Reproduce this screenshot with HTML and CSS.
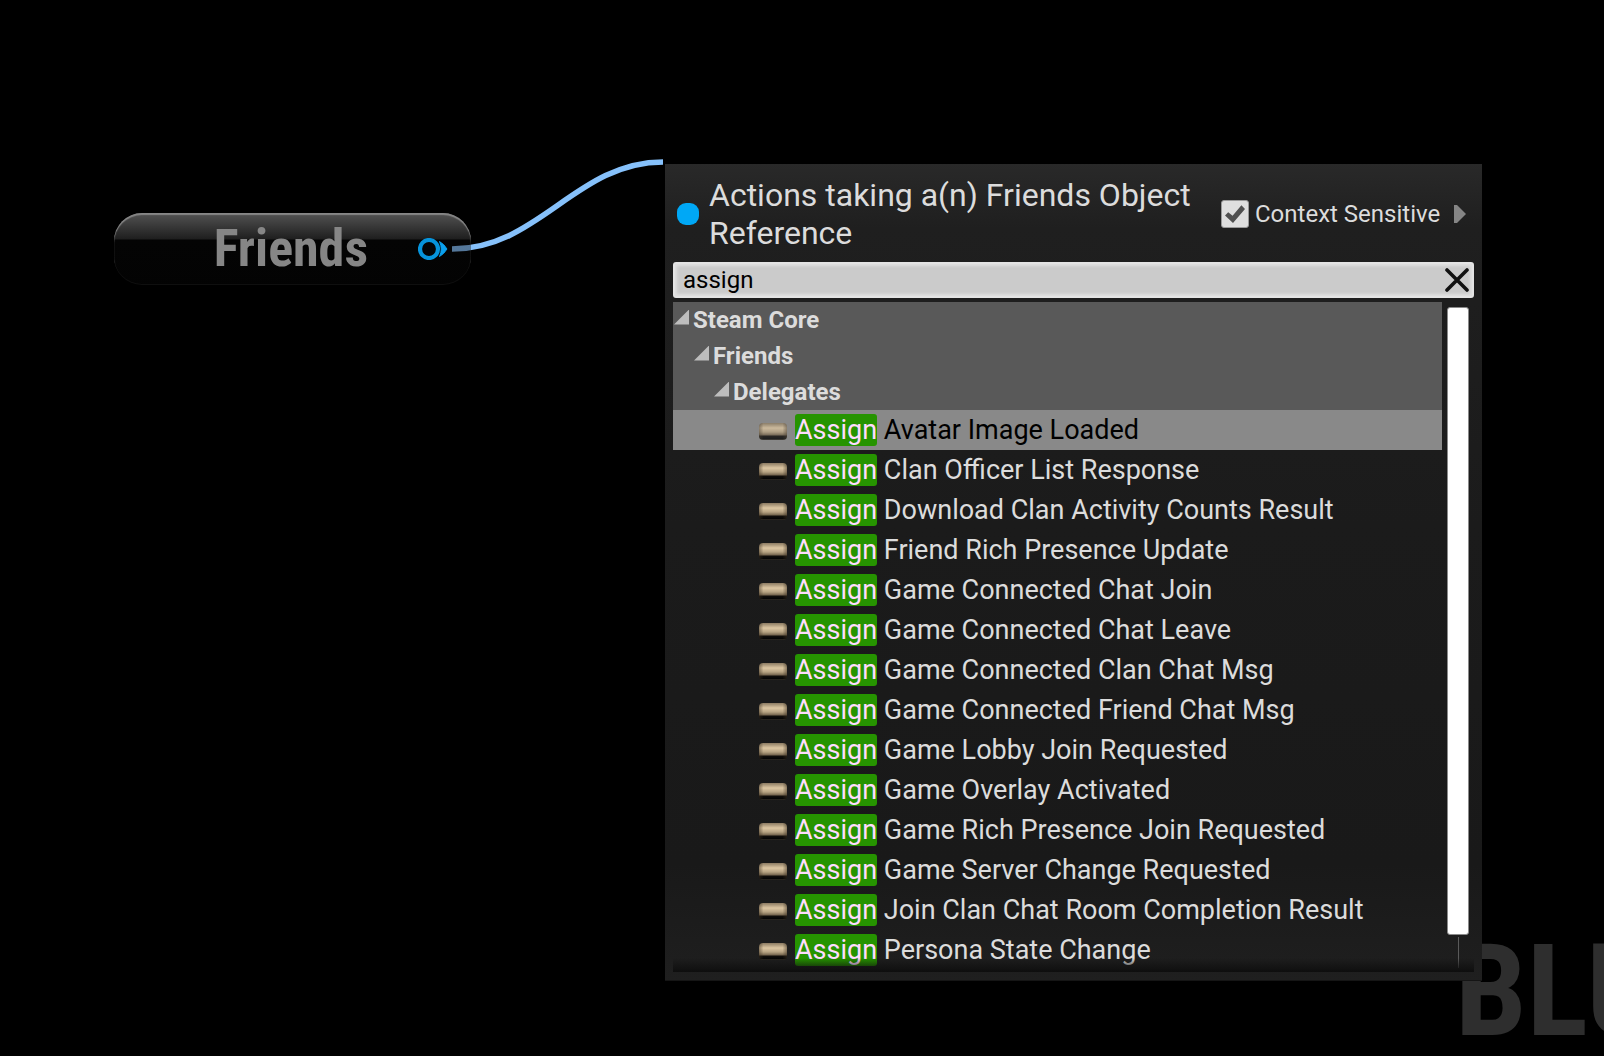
FILE: index.html
```html
<!DOCTYPE html>
<html lang="en">
<head>
<meta charset="utf-8">
<title>Blueprint graph</title>
<link rel="stylesheet" href="styles.css">
</head>
<body>
<main class="graph">
  <div class="watermark">BLU</div>

  <svg class="wire" width="212" height="96" viewBox="0 0 212 96" aria-hidden="true">
    <path d="M0 91 C87 91 124 4 211 4" fill="none" stroke="#86c1fb" stroke-width="5.6"/>
  </svg>

  <section class="node">
    <h2 class="node-title">Friends</h2>
    <svg class="pin" width="30" height="22" viewBox="0 0 30 22" aria-hidden="true">
      <circle cx="11" cy="11" r="9" fill="#030608" stroke="#0694dc" stroke-width="4.2"/>
      <path d="M21.5 3.5 Q26 6 29 11 Q26 16 21.5 18.5 Q25 11 21.5 3.5Z" fill="#0aa0ee" stroke="#0aa0ee"/>
    </svg>
  </section>

  <section class="menu">
    <header class="menu-header">
      <span class="type-dot"></span>
      <h1 class="menu-title">Actions taking a(n) Friends Object Reference</h1>
      <label class="context" for="context"><input class="check" type="checkbox" id="context" checked>Context Sensitive</label>
      <button class="expander" type="button" aria-label="Show object targets">
        <svg width="12" height="18" viewBox="0 0 12 18"><path d="M0 0h3l9 9-9 9H0z" fill="#858585"/></svg>
      </button>
    </header>

    <div class="search">
      <input class="search-input" type="text" value="assign" aria-label="Search actions">
      <button class="clear" type="button" aria-label="Clear search">
        <svg width="24" height="24" viewBox="0 0 24 24"><path d="M2 2 L22 22 M22 2 L2 22" stroke="#111" stroke-width="3.6" stroke-linecap="round"/></svg>
      </button>
    </div>

    <div class="results">
      <div class="tree">
        <button class="category" type="button"><i class="arrow"></i>Steam Core</button>
        <button class="category level-2" type="button"><i class="arrow"></i>Friends</button>
        <button class="category level-3" type="button"><i class="arrow"></i>Delegates</button>
        <button class="action selected" type="button"><i class="pill"></i><span><mark>Assign</mark> Avatar Image Loaded</span></button>
        <button class="action" type="button"><i class="pill"></i><span><mark>Assign</mark> Clan Officer List Response</span></button>
        <button class="action" type="button"><i class="pill"></i><span><mark>Assign</mark> Download Clan Activity Counts Result</span></button>
        <button class="action" type="button"><i class="pill"></i><span><mark>Assign</mark> Friend Rich Presence Update</span></button>
        <button class="action" type="button"><i class="pill"></i><span><mark>Assign</mark> Game Connected Chat Join</span></button>
        <button class="action" type="button"><i class="pill"></i><span><mark>Assign</mark> Game Connected Chat Leave</span></button>
        <button class="action" type="button"><i class="pill"></i><span><mark>Assign</mark> Game Connected Clan Chat Msg</span></button>
        <button class="action" type="button"><i class="pill"></i><span><mark>Assign</mark> Game Connected Friend Chat Msg</span></button>
        <button class="action" type="button"><i class="pill"></i><span><mark>Assign</mark> Game Lobby Join Requested</span></button>
        <button class="action" type="button"><i class="pill"></i><span><mark>Assign</mark> Game Overlay Activated</span></button>
        <button class="action" type="button"><i class="pill"></i><span><mark>Assign</mark> Game Rich Presence Join Requested</span></button>
        <button class="action" type="button"><i class="pill"></i><span><mark>Assign</mark> Game Server Change Requested</span></button>
        <button class="action" type="button"><i class="pill"></i><span><mark>Assign</mark> Join Clan Chat Room Completion Result</span></button>
        <button class="action" type="button"><i class="pill"></i><span><mark>Assign</mark> Persona State Change</span></button>
      </div>
      <div class="scrollbar"><span class="thumb"></span><span class="track"></span></div>
    </div>
  </section>
</main>
</body>
</html>
```
FILE: styles.css
```css
* { box-sizing: border-box; }

body {
  margin: 0;
  background: #000;
  color: #dcdcdc;
  font-family: Roboto, "Liberation Sans", sans-serif;
}

h1, h2 { margin: 0; font-weight: 400; }

button {
  margin: 0;
  padding: 0;
  border: 0;
  background: none;
  color: inherit;
  font: inherit;
  text-align: left;
}

svg { display: block; }

.graph {
  position: relative;
  min-height: 100vh;
  overflow: hidden;
}

.watermark {
  position: absolute;
  left: 1455px;
  top: 916px;
  color: #2e2e2e;
  font: 700 128px/150px "Roboto Condensed", Roboto, sans-serif;
}

.wire { position: absolute; left: 452px; top: 158px; }

/* Graph node */
.node {
  position: absolute;
  left: 114px;
  top: 213px;
  width: 357px;
  height: 72px;
  display: flex;
  align-items: center;
  justify-content: flex-end;
  gap: 50px;
  padding-right: 23px;
  border-radius: 28px;
  background: linear-gradient(rgba(92, 92, 92, .9), rgba(34, 34, 34, .9) 26px, rgba(10, 10, 10, .4) 27px, rgba(8, 8, 8, .4));
  box-shadow: inset 0 2px 1px #868686, inset 0 -1px 0 #0f0f0f;
}

.node-title {
  color: #868686;
  font: 700 52px/64px "Roboto Condensed", Roboto, sans-serif;
}

/* Action menu */
.menu {
  position: absolute;
  left: 665px;
  top: 164px;
  width: 817px;
  padding: 0 8px 8px;
  border: 1px solid #151515;
  border-width: 0 0 1px;
  background: linear-gradient(#292929, #1f1f1f 64px, #1b1b1b 360px, #191919 700px, #1f1f1f);
}

.menu-header {
  display: flex;
  align-items: center;
  padding: 12px 8px 10px 4px;
}

.type-dot {
  width: 22px;
  height: 22px;
  margin-right: 10px;
  border-radius: 9px;
  background: #00a8f6;
}

.menu-title {
  flex: 1;
  font-size: 32px;
  line-height: 38px;
}

.context {
  display: flex;
  align-items: center;
  gap: 6px;
  min-width: 224px;
  font-size: 24px;
  line-height: 28px;
}

.check {
  appearance: none;
  width: 28px;
  height: 28px;
  margin: 0;
  border: 1px solid #999;
  border-radius: 3px;
  background: #dedede;
  display: grid;
  place-items: center;
}

.check:checked::before {
  content: "";
  width: 20px;
  height: 18px;
  background: #505050;
  clip-path: polygon(0 58%, 16% 40%, 38% 60%, 82% 2%, 100% 22%, 40% 100%);
}

.expander { margin-left: 9px; }

.search {
  display: flex;
  align-items: center;
  height: 36px;
  padding-right: 3px;
  border: 2px solid #e4e4e4;
  border-radius: 3px;
  background: #cbcbcb;
  box-shadow: inset 0 0 3px 2px #e0e0e0;
}

.search-input {
  flex: 1;
  min-width: 0;
  padding: 0 8px;
  border: 0;
  outline: 0;
  background: none;
  color: #000;
  font: 24px/28px Roboto, "Liberation Sans", sans-serif;
}

.results {
  position: relative;
  display: flex;
  margin-top: 4px;
  padding-bottom: 2px;
}

.results::after {
  content: "";
  position: absolute;
  inset: auto 0 0;
  height: 14px;
  background: linear-gradient(rgba(14, 14, 14, 0), #0e0e0e);
}

.tree {
  flex: 1;
  display: flex;
  flex-direction: column;
}

.category {
  display: flex;
  align-items: center;
  height: 36px;
  padding-left: 1px;
  background: #595959;
  font-size: 24px;
  font-weight: 700;
}

.level-2 { padding-left: 21px; }
.level-3 { padding-left: 41px; }

.arrow {
  width: 15px;
  height: 15px;
  margin: 0 4px 6px 0;
  background: #bdbdbd;
  clip-path: polygon(100% 0, 100% 100%, 0 100%);
}

.action {
  display: flex;
  align-items: center;
  height: 40px;
  padding-left: 86px;
  font-size: 27px;
  line-height: 32px;
  white-space: nowrap;
}

.selected { background: #898989; color: #000; }

.pill {
  width: 28px;
  height: 17px;
  margin: 3px 8px 0 0;
  border-radius: 4px;
  background:
    linear-gradient(90deg, rgba(60, 48, 32, .5), transparent 16%, transparent 84%, rgba(60, 48, 32, .5)),
    linear-gradient(#8c7b62, #dcc6a2 5px, #b7a382 9px, #76664e 12px, #120f0b 13px, #050505 16px, #4a4237);
}

.selected .pill { opacity: .8; }

mark {
  display: inline-block;
  border-radius: 3px;
  background: #269400;
  color: #ffdcff;
}

.scrollbar {
  display: flex;
  flex-direction: column;
  align-items: center;
  width: 32px;
  padding: 5px 0 2px;
}

.thumb {
  flex: 1;
  width: 22px;
  border: 1px solid #8a8a8a;
  border-radius: 3px;
  background: #fff;
}

.track {
  width: 1px;
  height: 31px;
  margin-top: 2px;
  background: #5a5a5a;
}
```
